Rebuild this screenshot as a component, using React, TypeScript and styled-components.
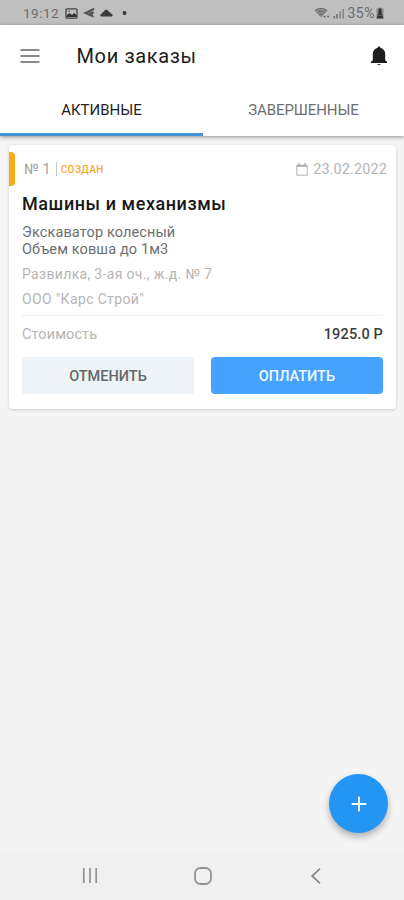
import React from "react";
import styled, { createGlobalStyle } from "styled-components";

const GlobalStyle = createGlobalStyle`
  * { box-sizing: border-box; }
  body { margin: 0; background: #f4f4f4; font-family: Roboto, "Liberation Sans", sans-serif; }
  button { font-family: inherit; border: 0; padding: 0; background: none; }
  svg { display: block; flex: none; }
`;

const Screen = styled.div`
  position: relative;
  width: 404px;
  height: 900px;
  display: flex;
  flex-direction: column;
  overflow: hidden;
  background: #f4f4f4;
`;

const StatusBar = styled.div`
  height: 25px;
  flex: none;
  display: flex;
  justify-content: space-between;
  padding: 1px 20px 0 23px;
  background: #bfbfbf;
  color: #6c6c6c;
`;

const StatusGroup = styled.div`
  display: flex;
  align-items: center;
`;

const StatusText = styled.span`
  font-size: 13.5px;
  line-height: 24px;
  letter-spacing: 0.5px;
`;

const BatteryLevel = styled.span`
  margin: 0 1px 0 3px;
  font-size: 14px;
  line-height: 24px;
  letter-spacing: 0.5px;
`;

const Header = styled.header`
  flex: none;
  height: 111px;
  background: #fff;
  box-shadow: 0 1px 4px rgba(0, 0, 0, 0.42);
  z-index: 1;
`;

const AppBar = styled.div`
  height: 61px;
  display: flex;
  align-items: center;
  padding: 0 14px 0 20px;
`;

const PageTitle = styled.h1`
  flex: 1;
  margin: 1px 0 0 36.5px;
  font-size: 20px;
  line-height: 26px;
  font-weight: 400;
  letter-spacing: 0.65px;
  color: #1c1c1c;
`;

const Tabs = styled.nav`
  display: grid;
  grid-template-columns: 203px 201px;
  height: 50px;
`;

const Tab = styled.button<{ $active?: boolean }>`
  font-size: 15px;
  line-height: 20px;
  padding-bottom: ${(p) => (p.$active ? 0 : 3)}px;
  border-bottom: ${(p) => (p.$active ? "3px solid #4493d8" : "0")};
  color: ${(p) => (p.$active ? "#1f1f1f" : "#6f6f6f")};
  letter-spacing: ${(p) => (p.$active ? 0 : -0.1)}px;
`;

const Card = styled.article`
  margin: 9px 8px 0 9px;
  height: 264px;
  padding-top: 7px;
  background: #fff;
  border-radius: 4px;
  box-shadow: 0 1px 3px rgba(0, 0, 0, 0.17);
`;

const CardTop = styled.div`
  display: flex;
  align-items: center;
  height: 34px;
  padding-right: 9px;
`;

const Stripe = styled.div`
  width: 6px;
  height: 34px;
  border-radius: 0 4px 4px 0;
  background: #fbaa19;
`;

const OrderNumber = styled.span`
  margin-left: 9px;
  font-size: 14.5px;
  color: #a3a3a3;
`;

const Separator = styled.i`
  width: 1px;
  height: 14px;
  margin: 0 4px 0 5px;
  background: #c6c6c6;
`;

const Status = styled.span`
  flex: 1;
  font-size: 10px;
  font-weight: 500;
  letter-spacing: 0.4px;
  color: #f9aa2c;
`;

const OrderDate = styled.time`
  margin-left: 5px;
  font-size: 14.5px;
  letter-spacing: 0.1px;
  color: #b4b4b4;
`;

const CardBody = styled.div`
  padding: 0 13px;
`;

const OrderTitle = styled.h2`
  margin: 6px 0 0;
  font-size: 18px;
  line-height: 24px;
  font-weight: 500;
  letter-spacing: 0.57px;
  color: #171717;
`;

const Description = styled.p`
  margin: 8px 0 0;
  font-size: 14.5px;
  line-height: 17px;
  letter-spacing: 0.12px;
  color: #6e6e6e;
`;

const Meta = styled.p<{ $spacing: number }>`
  margin: 7px 0 0;
  font-size: 14px;
  line-height: 18px;
  letter-spacing: ${(p) => p.$spacing}px;
  color: #b5b5b5;
`;

const PriceRow = styled.div`
  display: flex;
  justify-content: space-between;
  align-items: center;
  height: 36px;
  margin-top: 7px;
  padding-top: 1px;
  border-top: 1px solid #ededed;
`;

const PriceLabel = styled.span`
  font-size: 14.5px;
  letter-spacing: 0.1px;
  color: #b5b5b5;
`;

const Price = styled.span`
  font-size: 14.5px;
  font-weight: 500;
  letter-spacing: 0.15px;
  color: #3c3c3c;
`;

const Actions = styled.div`
  display: grid;
  grid-template-columns: 172px 172px;
  justify-content: space-between;
  margin-top: 6px;
`;

const ActionButton = styled.button<{ $primary?: boolean }>`
  height: 37px;
  padding-top: 2px;
  border-radius: ${(p) => (p.$primary ? 4 : 2)}px;
  font-size: 14.5px;
  font-weight: 500;
  background: ${(p) => (p.$primary ? "#45a3ff" : "#edf3f6")};
  color: ${(p) => (p.$primary ? "#f2f9ff" : "#64686a")};
`;

const Fab = styled.button`
  position: absolute;
  right: 16px;
  bottom: 67px;
  width: 59px;
  height: 59px;
  display: grid;
  place-items: center;
  border-radius: 50%;
  background: #2395f3;
  box-shadow: 0 4px 7px rgba(0, 0, 0, 0.28);
`;

const NavBar = styled.footer`
  flex: none;
  height: 49px;
  margin-top: auto;
  display: grid;
  grid-template-columns: 16px 20px 12px;
  align-items: center;
  column-gap: 95px;
  padding-left: 82px;
  background: #f0f0f0;
`;

const Leading = styled.div`
  display: flex;
  align-items: center;
  gap: 5px;
  margin-left: 6px;
`;

const PictureIcon = () => (
  <svg width="13" height="11" viewBox="0 0 13 11">
    <rect x="1" y="0.8" width="11" height="9.4" rx="1" fill="none" stroke="#444" strokeWidth="1.3" />
    <path d="M2 9V7l2.5-2L7 7l2-2 2.5 2v2z" fill="#333" />
    <circle cx="4" cy="3.3" r="0.8" fill="#444" />
  </svg>
);

const PlaneIcon = () => (
  <svg width="12" height="12" viewBox="0 0 12 12">
    <path d="M0 6 10.8.8l.6 2.2-2 1.4 2 1.4-1.8 1.4 1.4 3.6-5.4-2.2z" fill="#555" />
    <path d="M5.2 6.4 11 3" stroke="#8a8a8a" strokeWidth="0.8" />
  </svg>
);

const CloudIcon = () => (
  <svg width="13" height="8" viewBox="0 0 13 8">
    <path d="M1.7 7.5C-.2 7.4 0 4.6 2.1 4.4 2.3 2.9 3.4 2.8 3.9 2.8 4.8-.1 8.3.2 8.7 3c1-.2 1.8.5 1.9 1.5 2.4.1 2.6 2.8.8 3z" fill="#393939" />
  </svg>
);

const WifiIcon = () => (
  <svg width="18" height="12" viewBox="0 0 18 12">
    <path d="M.5 3.4C4.3.2 9.7.2 13.5 3.4L7 10.5z" fill="#8c8c8c" />
    <path d="M.8 3.6c3.7-2.8 8.7-2.8 12.4 0M2.8 5.7c2.5-1.8 5.9-1.8 8.4 0M4.9 7.8c1.3-.9 2.9-.9 4.2 0" fill="none" stroke="#6c6c6c" strokeWidth="1" />
    <path d="m10.5 8.2-1.6 2h3.2zM12.6 8.8h3l-1.5 2z" fill="#686868" />
  </svg>
);

const SignalIcon = () => (
  <svg width="13" height="11" viewBox="0 0 13 11">
    <path d="M2.2 8v2.5M5 6v4.5" stroke="#686868" strokeWidth="1.4" />
    <path d="M8.2 3.5v7M11.2 1v9.5" stroke="#858585" strokeWidth="1.6" />
  </svg>
);

const BatteryIcon = () => (
  <svg width="8" height="12" viewBox="0 0 8 12">
    <path d="M2.5.5h3v1H7.5v10H.5v-10h2z" fill="#8a8a8a" />
    <path d="M2.6 1.5h2.8v3.8L7.5 11.5H.5l2.1-6.2z" fill="#343434" />
    <path d="M2.5 8.5h3" stroke="#777" strokeWidth="0.8" />
  </svg>
);

const MenuIcon = () => (
  <svg width="20" height="16" viewBox="0 0 20 16">
    <path d="M.5 2h19M.5 8h19M.5 14h19" stroke="#656565" strokeWidth="1.7" />
  </svg>
);

const BellIcon = () => (
  <svg width="22" height="22" viewBox="0 0 22 22">
    <path d="M9.7 2.8c.1-1.8 2.5-1.8 2.6 0 3.5 1 4.9 3.3 4.9 6.4v6.2l1.8 1.2v1.3H3v-1.3l1.8-1.2V9.2c0-3.1 1.4-5.4 4.9-6.4z" fill="#1d1d1d" />
    <path d="M9.4 18.9h3.2c-.2 1.8-3 1.8-3.2 0z" fill="#444" />
  </svg>
);

const CalendarIcon = () => (
  <svg width="12" height="13" viewBox="0 0 12 13">
    <path d="M.8 2.3h10.4v9.9H.8z" fill="none" stroke="#b4b4b4" />
    <path d="M.8 3h10.4M3 0.3v2M9 0.3v2" stroke="#a5a5a5" strokeWidth="1.5" />
  </svg>
);

export default function App() {
  return (
    <>
      <GlobalStyle />
      <Screen>
        <StatusBar>
          <StatusGroup>
            <StatusText>19:12</StatusText>
            <Leading>
              <PictureIcon />
              <PlaneIcon />
              <CloudIcon />
              <svg width="14" height="6" viewBox="0 0 14 6">
                <circle cx="6.5" cy="3" r="1.9" fill="#333" />
              </svg>
            </Leading>
          </StatusGroup>
          <StatusGroup>
            <WifiIcon />
            <SignalIcon />
            <BatteryLevel>35%</BatteryLevel>
            <BatteryIcon />
          </StatusGroup>
        </StatusBar>
        <Header>
          <AppBar>
            <MenuIcon />
            <PageTitle>Мои заказы</PageTitle>
            <BellIcon />
          </AppBar>
          <Tabs>
            <Tab $active>АКТИВНЫЕ</Tab>
            <Tab>ЗАВЕРШЕННЫЕ</Tab>
          </Tabs>
        </Header>
        <Card>
          <CardTop>
            <Stripe />
            <OrderNumber>№ 1</OrderNumber>
            <Separator />
            <Status>СОЗДАН</Status>
            <CalendarIcon />
            <OrderDate>23.02.2022</OrderDate>
          </CardTop>
          <CardBody>
            <OrderTitle>Машины и механизмы</OrderTitle>
            <Description>
              Экскаватор колесный
              <br />
              Объем ковша до 1м3
            </Description>
            <Meta $spacing={0.33}>Развилка, 3-ая оч., ж.д. № 7</Meta>
            <Meta $spacing={0.35}>ООО "Карс Строй"</Meta>
            <PriceRow>
              <PriceLabel>Стоимость</PriceLabel>
              <Price>1925.0 Р</Price>
            </PriceRow>
            <Actions>
              <ActionButton>ОТМЕНИТЬ</ActionButton>
              <ActionButton $primary>ОПЛАТИТЬ</ActionButton>
            </Actions>
          </CardBody>
        </Card>
        <NavBar>
          <svg width="16" height="17" viewBox="0 0 16 17">
            <path d="M1.8 1v15M8 1v15M14.2 1v15" stroke="#929292" strokeWidth="1.7" />
          </svg>
          <svg width="20" height="20" viewBox="0 0 20 20">
            <rect x="2" y="2" width="16" height="16" rx="5.5" fill="none" stroke="#929292" strokeWidth="1.8" />
          </svg>
          <svg width="13" height="18" viewBox="0 0 13 18">
            <path d="M12 1.7 4.2 9l7.8 7.3" fill="none" stroke="#888" strokeWidth="1.8" />
          </svg>
        </NavBar>
        <Fab aria-label="+">
          <svg width="16" height="16" viewBox="0 0 16 16">
            <path d="M8 .7v14.6M.7 8h14.6" stroke="#fff" strokeWidth="2" />
          </svg>
        </Fab>
      </Screen>
    </>
  );
}
